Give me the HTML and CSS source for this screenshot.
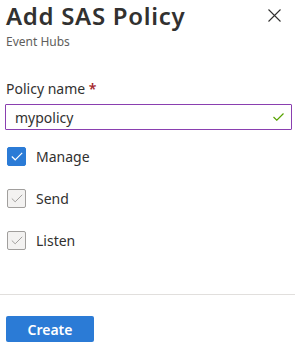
FILE: index.html
```html
<!DOCTYPE html>
<html>
<head>
<meta charset="utf-8">
<link rel="stylesheet" href="styles.css">
</head>
<body>
<div class="panel">
  <div class="header">
    <div class="titles">
      <h1 class="title">Add SAS Policy</h1>
      <div class="subtitle">Event Hubs</div>
    </div>
    <button class="close" aria-label="Close">
      <svg width="13" height="13" viewBox="0 0 13 13"><path d="M0.5 0.5 L12.5 12.5 M12.5 0.5 L0.5 12.5" stroke="#323130" stroke-width="1.1" fill="none"/></svg>
    </button>
  </div>
  <div class="form">
    <label class="label">Policy name <span class="req">*</span></label>
    <div class="input">
      <span class="value">mypolicy</span>
      <svg class="ok" width="11" height="8" viewBox="0 0 11 8"><path d="M0.5 4 L3.8 7.2 L10.5 0.5" stroke="#57a300" stroke-width="1.2" fill="none"/></svg>
    </div>
    <div class="checks">
      <div class="check">
        <span class="box on"><svg width="12" height="9" viewBox="0 0 12 9"><path d="M0.8 4.5 L4.2 7.8 L11.2 0.8" stroke="#fff" stroke-width="1.2" fill="none"/></svg></span>
        <span class="ctext">Manage</span>
      </div>
      <div class="check">
        <span class="box off"><svg width="12" height="9" viewBox="0 0 12 9"><path d="M0.8 4.5 L4.2 7.8 L11.2 0.8" stroke="#a19f9d" stroke-width="1" fill="none"/></svg></span>
        <span class="ctext">Send</span>
      </div>
      <div class="check">
        <span class="box off"><svg width="12" height="9" viewBox="0 0 12 9"><path d="M0.8 4.5 L4.2 7.8 L11.2 0.8" stroke="#a19f9d" stroke-width="1" fill="none"/></svg></span>
        <span class="ctext">Listen</span>
      </div>
    </div>
  </div>
  <div class="footer">
    <button class="primary">Create</button>
  </div>
</div>
</body>
</html>
```
FILE: styles.css
```css
html, body {
  margin: 0;
  padding: 0;
  background: #fff;
}
body {
  font-family: "Segoe UI", "Noto Sans", "Open Sans", sans-serif;
  color: #323130;
  width: 295px;
  height: 354px;
  overflow: hidden;
}
.panel {
  display: flex;
  flex-direction: column;
  padding-top: 3px;
}
.header {
  display: flex;
  justify-content: space-between;
  align-items: flex-start;
  padding: 0 14px 0 6px;
}
.title {
  margin: 0;
  font-size: 24px;
  font-weight: 600;
  line-height: 26px;
  color: #323130;
  letter-spacing: 0.7px;
}
.subtitle {
  font-size: 12px;
  line-height: 16px;
  margin-top: 5px;
  color: #605e5c;
}
.close {
  border: 0;
  background: none;
  padding: 0;
  margin-top: 6px;
  width: 13px;
  height: 13px;
  display: flex;
}
.form {
  display: flex;
  flex-direction: column;
  padding: 0 3px 0 5px;
  margin-top: 29px;
}
.label {
  font-size: 14px;
  line-height: 20px;
  padding-left: 1px;
  color: #323130;
}
.req {
  color: #a4262c;
  font-weight: 600;
}
.input {
  margin-top: 5px;
  height: 24px;
  border: 1.5px solid #8a3fb0;
  border-radius: 1px;
  display: flex;
  align-items: center;
  justify-content: space-between;
  padding: 0 7px 0 9px;
}
.value {
  font-size: 14px;
  color: #323130;
}
.checks {
  display: flex;
  flex-direction: column;
  gap: 22px;
  margin-top: 16px;
  padding-left: 2px;
}
.check {
  display: flex;
  align-items: center;
  gap: 10px;
  height: 20px;
}
.box {
  width: 19px;
  height: 19px;
  box-sizing: border-box;
  border-radius: 2px;
  display: flex;
  align-items: center;
  justify-content: center;
}
.box.on {
  background: #2b7bd6;
  border: 1px solid #2b7bd6;
}
.box.off {
  background: #f3f2f1;
  border: 1px solid #a19f9d;
}
.ctext {
  font-size: 14px;
  color: #323130;
}
.footer {
  margin-top: 44px;
  border-top: 1px solid #e1dfdd;
  padding: 21px 6px 0;
}
.primary {
  width: 88px;
  height: 26px;
  border: 0;
  border-radius: 2px;
  background: #2b7bd6;
  color: #fff;
  font-family: "Segoe UI", "Noto Sans", "Open Sans", sans-serif;
  font-size: 14px;
  font-weight: 600;
  padding: 0;
}
```
